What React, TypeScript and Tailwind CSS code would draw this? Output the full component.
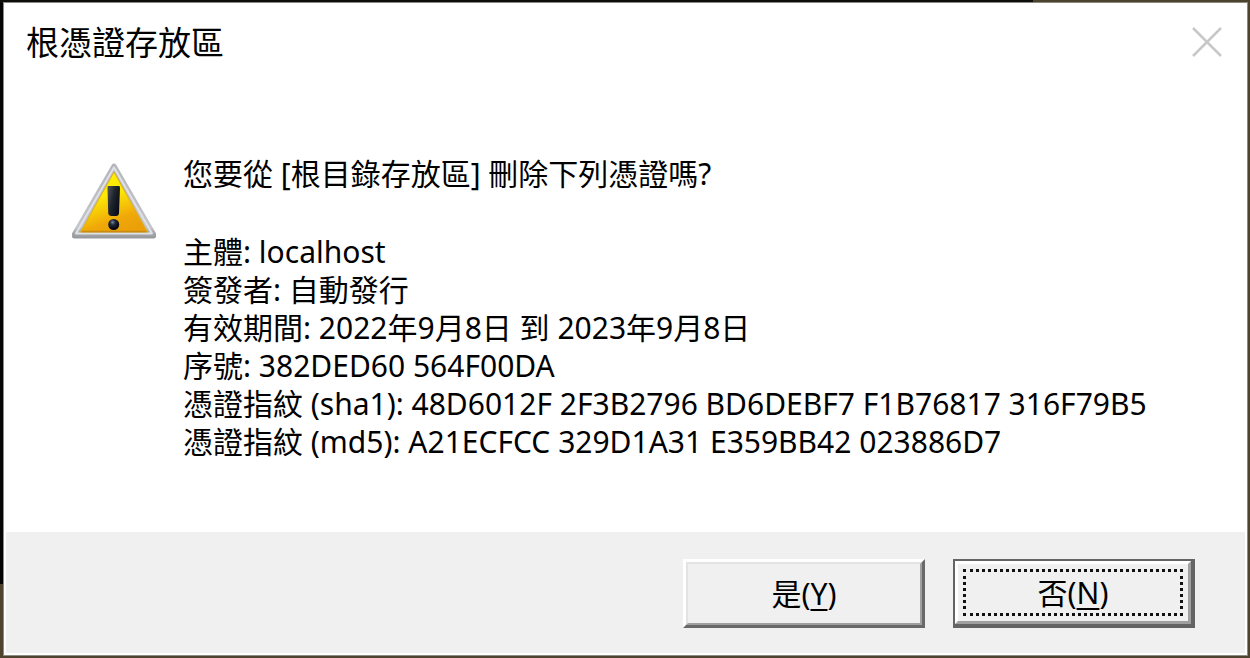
import type { ReactNode } from "react";

const details: [string, string][] = [
  ["主體", "localhost"],
  ["簽發者", "自動發行"],
  ["有效期間", "2022年9月8日 到 2023年9月8日"],
  ["序號", "382DED60 564F00DA"],
  ["憑證指紋 (sha1)", "48D6012F 2F3B2796 BD6DEBF7 F1B76817 316F79B5"],
  ["憑證指紋 (md5)", "A21ECFCC 329D1A31 E359BB42 023886D7"],
];

function WarningIcon() {
  return (
    <svg viewBox="0 0 88 80" className="h-20 w-[88px] shrink-0" role="img" aria-label="警告">
      <defs>
        <linearGradient id="face" x1="0.2" y1="0" x2="0.6" y2="1">
          <stop offset="0" stopColor="#fff200" />
          <stop offset="0.4" stopColor="#fde806" />
          <stop offset="0.8" stopColor="#f0a808" />
          <stop offset="1" stopColor="#eba00a" />
        </linearGradient>
        <linearGradient id="rim" x1="0" y1="0" x2="0" y2="1">
          <stop offset="0" stopColor="#b5b7bd" />
          <stop offset="0.9" stopColor="#c4c6cc" />
          <stop offset="1" stopColor="#a0a2a6" />
        </linearGradient>
        <linearGradient id="bar" x1="0" y1="0" x2="1" y2="0.6">
          <stop offset="0" stopColor="#55595c" />
          <stop offset="0.5" stopColor="#20242c" />
          <stop offset="1" stopColor="#080c18" />
        </linearGradient>
        <radialGradient id="dot" cx="0.4" cy="0.3" r="0.6">
          <stop offset="0" stopColor="#7787a5" />
          <stop offset="0.4" stopColor="#222a3c" />
          <stop offset="1" stopColor="#060810" />
        </radialGradient>
      </defs>
      <path d="M44 6 83.500 75H4.500Z" fill="#97999d" stroke="#97999d" strokeWidth="5" strokeLinejoin="round" />
      <path d="M44 5 83.500 73H4.500Z" fill="url(#rim)" stroke="url(#rim)" strokeWidth="5" strokeLinejoin="round" />
      <path d="M44 6.500 82 72.500H6Z" fill="none" stroke="#dfe1e6" strokeWidth="2" strokeLinejoin="round" />
      <path d="M44 11 77.500 71H10.500Z" fill="url(#face)" stroke="#dcae20" strokeWidth="1" strokeLinejoin="round" />
      <path d="M11.500 70.500H76.500" stroke="#c98b10" strokeWidth="1.500" />
      <path d="M38 25H49Q50 25 50 27L49 52Q48.800 55 46 55H41.500Q38.500 55 38.200 52L37.500 27Q37.500 25 38 25Z" fill="url(#bar)" />
      <circle cx="43.700" cy="63.500" r="5.500" fill="url(#dot)" />
    </svg>
  );
}

function KeyLabel({ text, accessKey }: { text: string; accessKey: string }) {
  return (
    <span>
      {text}(<span className="underline decoration-2 underline-offset-4">{accessKey}</span>)
    </span>
  );
}

function DialogButton({ children, isDefault = false }: { children: ReactNode; isDefault?: boolean }) {
  return (
    <button
      type="button"
      className={
        isDefault
          ? "h-[69px] w-[242px] border-t-2 border-r-4 border-b-4 border-l-2 border-[#646464] bg-[#f0f0f0]"
          : "h-[69px] w-[242px] border-t-3 border-r-3 border-b-3 border-l-3 border-t-white border-r-[#696969] border-b-[#696969] border-l-white bg-[#f0f0f0]"
      }
    >
      {isDefault ? (
        <span className="flex h-full border-3 border-t-white border-r-[#a0a0a0] border-b-[#a0a0a0] border-l-white p-[5px]">
          <span className="flex flex-1 items-center justify-center border-3 border-dotted border-[#111111]">{children}</span>
        </span>
      ) : (
        <span className="flex h-full items-center justify-center border-2 border-t-[#e3e3e3] border-r-[#a0a0a0] border-b-[#a0a0a0] border-l-[#e3e3e3]">
          {children}
        </span>
      )}
    </button>
  );
}

export default function App() {
  return (
    <div
      lang="zh-TW"
      className="flex min-h-screen flex-col bg-[#4d432f] bg-[linear-gradient(#0d0d0d,#0d0d0d),linear-gradient(#050505,#050505)] bg-[length:1033px_3px,4px_584px] bg-no-repeat pt-[2px] pr-[2px] pb-[2px] pl-[3px] font-['Noto_Sans','Noto_Sans_CJK_TC',sans-serif] text-[30px] text-black"
    >
      <div role="dialog" aria-labelledby="title" aria-describedby="message" className="flex flex-1 flex-col border border-[#8d8a82] bg-white">
        <header className="flex items-center justify-between pt-4 pr-[22px] pl-[22px]">
          <h1 id="title" className="text-[33px] leading-[48px]">根憑證存放區</h1>
          <button type="button" aria-label="關閉" className="flex size-9 items-center justify-center">
            <svg viewBox="0 0 32 32" className="size-8" fill="none" stroke="#c8c8c8" strokeWidth="2.500">
              <path d="M2 1 30 29M30 1 2 29" />
            </svg>
          </button>
        </header>

        <main className="flex flex-1 gap-[25px] pt-[88px] pb-[71px] pl-[66px]">
          <div className="pt-[6px]">
            <WarningIcon />
          </div>
          <div id="message" className="leading-[38px] whitespace-nowrap">
            <p>您要從 [根目錄存放區] 刪除下列憑證嗎?</p>
            <ul className="pt-10">
              {details.map(([label, value]) => (
                <li key={label}>
                  {label}: {value}
                </li>
              ))}
            </ul>
          </div>
        </main>

        <footer className="mx-[2px] mb-[2px] flex justify-end gap-7 bg-[#f0f0f0] pt-[27px] pr-[50px] pb-[25px]">
          <DialogButton>
            <KeyLabel text="是" accessKey="Y" />
          </DialogButton>
          <DialogButton isDefault>
            <KeyLabel text="否" accessKey="N" />
          </DialogButton>
        </footer>
      </div>
    </div>
  );
}
